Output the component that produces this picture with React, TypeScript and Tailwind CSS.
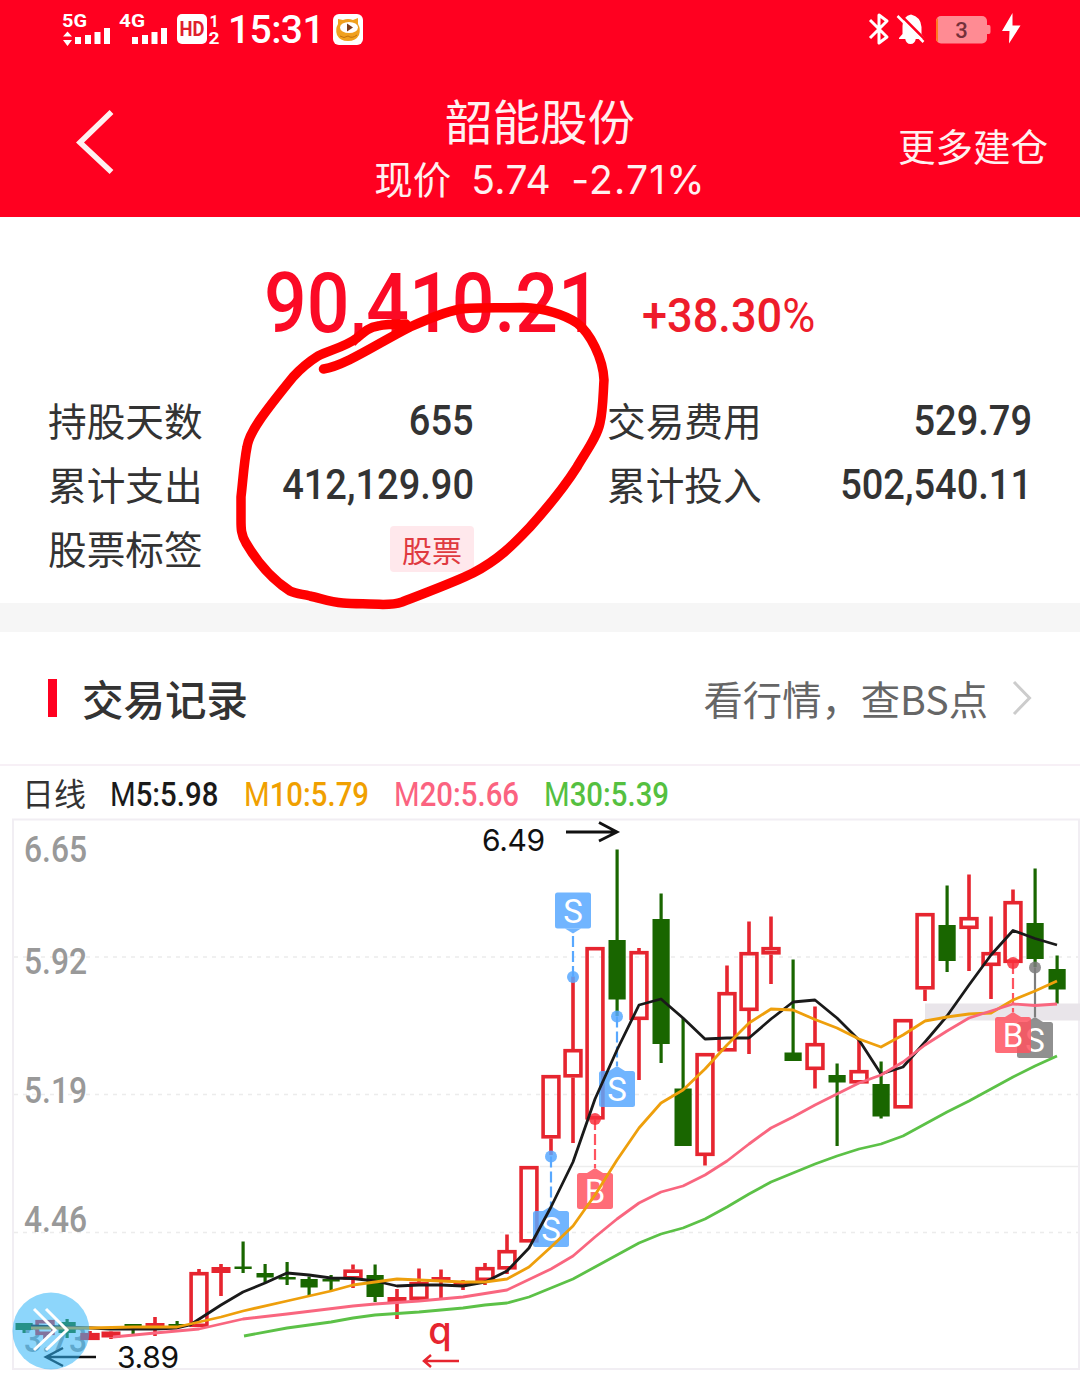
const RED = "#e6252f";
const GREEN = "#196600";

// x, high, top, bottom, low, color
type Candle = [number, number, number, number, number, "r" | "g"];

const candles: Candle[] = [
  [24, 1323, 1323, 1330, 1333, "g"],
  [45, 1320, 1320, 1335, 1339, "r"],
  [67, 1319, 1322, 1333, 1338, "g"],
  [90, 1331, 1333, 1340, 1340, "r"],
  [111, 1331, 1331.5, 1337.5, 1339, "r"],
  [133, 1324, 1324, 1327, 1334, "g"],
  [155, 1317, 1323, 1328, 1336, "r"],
  [177, 1321, 1324, 1327, 1327, "g"],
  [199, 1269, 1272, 1327, 1327, "r"],
  [221, 1264, 1267, 1273, 1296, "r"],
  [243, 1241.5, 1266.5, 1269, 1273, "g"],
  [265, 1264, 1273, 1277.5, 1282, "g"],
  [287, 1262, 1277, 1279.5, 1285, "g"],
  [309, 1276.5, 1279, 1287.5, 1295, "g"],
  [331, 1275, 1279, 1281.5, 1291, "g"],
  [353, 1264.5, 1269.5, 1279.5, 1288, "r"],
  [375, 1264.5, 1275, 1297, 1302, "g"],
  [397, 1289, 1297, 1302, 1319, "r"],
  [419, 1268.5, 1282, 1300, 1300, "r"],
  [441, 1269.5, 1277, 1281, 1299.5, "r"],
  [463, 1280, 1281, 1285, 1290, "r"],
  [485, 1263, 1267, 1281, 1285, "r"],
  [507, 1234.5, 1250, 1269.5, 1274, "r"],
  [529, 1166, 1166, 1242.5, 1242.5, "r"],
  [551, 1075, 1075, 1138.5, 1155, "r"],
  [573, 976.5, 1049, 1077.5, 1143, "r"],
  [595, 947, 947, 1119.5, 1119.5, "r"],
  [617, 849.5, 940, 999.5, 1016, "g"],
  [639, 948, 951, 1020, 1080, "r"],
  [661, 893.5, 919, 1044, 1063, "g"],
  [683, 1018, 1088.5, 1146, 1146, "g"],
  [705, 1053, 1053, 1156, 1165.5, "r"],
  [727, 965.5, 992, 1051.5, 1051.5, "r"],
  [749, 921.5, 952, 1011, 1054, "r"],
  [771, 916.5, 947, 954.5, 984, "r"],
  [793, 959.5, 1052.5, 1061, 1061, "g"],
  [815, 1006.5, 1043, 1070, 1088.5, "r"],
  [837, 1063.5, 1075, 1082.5, 1146, "g"],
  [859, 1040, 1070, 1083.5, 1083.5, "r"],
  [881, 1061.5, 1084, 1116.5, 1118.5, "g"],
  [903, 1019, 1019, 1108.5, 1108.5, "r"],
  [925, 913, 913, 989.5, 1001, "r"],
  [947, 885.5, 925, 961, 972, "g"],
  [969, 874.5, 917, 929, 971, "r"],
  [991, 916.5, 952, 966, 999, "r"],
  [1013, 889.5, 901, 963, 963, "r"],
  [1035, 868.5, 923, 959, 967, "g"],
  [1057, 955.5, 969, 989.5, 1003.5, "g"],
];

const averages = [
  {
    color: "#1a1a1a",
    points:
      "31,1326 92,1328 110,1329 155,1329 177,1328 190,1325 221,1305 243,1292 265,1283 287,1273 309,1275 331,1278 353,1278.5 375,1281 397,1286 419,1285 441,1285 463,1286 485,1282 507,1271 529,1248 551,1207 573,1162 595,1099 617,1050 639,1005 661,999 683,1018 705,1039 727,1038 749,1038 771,1019 793,1002 815,1000 837,1018 859,1040 881,1074 903,1067 925,1042 947,1016 969,985 991,955 1013,930.5 1035,938.5 1057,945",
  },
  {
    color: "#ee9f0c",
    points:
      "31,1328 90,1328 133,1327 177,1327 199,1322 221,1317 243,1311 287,1301 331,1291 353,1285 375,1282 397,1279 441,1281 463,1282 485,1282 507,1279 529,1267 551,1247 573,1226 595,1195 617,1160 639,1128 661,1103 683,1090 705,1069 727,1045 749,1023 771,1009 793,1010 815,1019.5 837,1028 859,1039 881,1047 903,1035 925,1021 947,1017 969,1014 991,1013 1013,1000 1035,991 1057,981",
  },
  {
    color: "#f9667f",
    points:
      "113,1337 155,1333 199,1329 243,1319 287,1314 353,1306 375,1304 419,1301 463,1297 507,1290 551,1269 573,1256 595,1237 617,1219 639,1203 661,1192 683,1186 705,1175 727,1161 749,1144 771,1128 793,1117 815,1105 837,1094 859,1083 881,1075 903,1062 925,1045 947,1031 969,1018 991,1011 1013,1004 1035,1005.5 1057,1004",
  },
  {
    color: "#5cc147",
    points:
      "244,1336 287,1328 331,1322 353,1318 375,1315 419,1312 441,1310 463,1308 485,1305 507,1303 529,1297 551,1288 573,1279 595,1267 617,1255 639,1243 661,1234 683,1228 705,1219 727,1207 749,1194 771,1182 793,1173 815,1164 837,1156 859,1149 881,1144 903,1136 925,1124 947,1112 969,1101 991,1089 1013,1077 1035,1066 1057,1056",
  },
];

const axisLabels = [
  { text: "6.65", y: 862 },
  { text: "5.92", y: 973.5 },
  { text: "5.19", y: 1103 },
  { text: "4.46", y: 1232 },
  { text: "3.73", y: 1352 },
];

// box y is the top edge of the square, dot is the price point it belongs to
const marks = [
  { letter: "S", x: 551, box: 1211, dot: 1156.5, color: "#58a8ff" },
  { letter: "S", x: 573, box: 892.5, dot: 977, color: "#58a8ff" },
  { letter: "B", x: 595, box: 1173, dot: 1119, color: "#ff5460" },
  { letter: "S", x: 617, box: 1071, dot: 1016.5, color: "#58a8ff" },
  { letter: "S", x: 1035, box: 1022, dot: 967.5, color: "#7d7d7d" },
  { letter: "B", x: 1013, box: 1017, dot: 963, color: "#ff5460" },
];

const CandleItem = ({ data }: { data: Candle }) => {
  const [x, high, top, bottom, low, kind] = data;
  if (kind === "g") {
    return (
      <g fill={GREEN}>
        <rect x={x - 1.5} y={high} width={3.2} height={low - high} />
        <rect x={x - 8.5} y={top} width={17.2} height={bottom - top} />
      </g>
    );
  }
  const solid = bottom - top < 6.5;
  return (
    <g fill={RED}>
      <rect x={x - 1.8} y={high} width={3.6} height={top - high} />
      <rect x={x - 1.8} y={bottom} width={3.6} height={low - bottom} />
      {solid ? (
        <rect x={x - 9.5} y={top} width={19} height={bottom - top} />
      ) : (
        <rect x={x - 7.9} y={top + 1.7} width={15.8} height={bottom - top - 3.4} fill="none" stroke={RED} strokeWidth={3.6} />
      )}
    </g>
  );
};

const Chart = () => {
  return (
    <svg viewBox="0 818 1080 563" className="block w-[1080px] h-[563px]">
      <rect x={13} y={819.5} width={1066} height={549.5} fill="none" stroke="#f1eef3" strokeWidth={2} />
      {[957, 1094.5, 1232.5].map((y) => (
        <line key={y} x1={14} x2={1078} y1={y} y2={y} stroke="#ececec" strokeWidth={1.5} strokeDasharray="4 5" />
      ))}
      <line x1={540} x2={1078} y1={1166.5} y2={1166.5} stroke="#ededed" strokeWidth={1.5} />
      <rect x={925} y={1003.5} width={155} height={17} fill="#e9e5ea" />

      {axisLabels.map((label) => (
        <text key={label.text} x={24} y={label.y} textLength={63} lengthAdjust="spacingAndGlyphs" fontSize={36} fill="#999" className="font-['Roboto',sans-serif] font-medium">
          {label.text}
        </text>
      ))}

      {candles.map((item) => (
        <CandleItem key={item[0]} data={item} />
      ))}

      {marks.map((m) => {
        const above = m.box < m.dot;
        const edge = above ? m.box + 36 : m.box;
        const tip = above ? edge + 5 : edge - 5;
        return (
          <g key={m.letter + m.x}>
            <line x1={m.x} x2={m.x} y1={m.dot} y2={tip} stroke={m.color} strokeWidth={2.2} strokeDasharray={m.color === "#7d7d7d" ? undefined : "11 4"} />
            <circle cx={m.x} cy={m.dot} r={6} fill={m.letter === "B" ? "#f8303c" : m.color} fillOpacity={0.85} />
            <g fill={m.color} fillOpacity={0.85}>
              <rect x={m.x - 18} y={m.box} width={36} height={36} rx={2.5} />
              <path d={`M${m.x - 8} ${edge}L${m.x} ${tip}L${m.x + 8} ${edge}Z`} />
            </g>
            <text x={m.x} y={m.box + 30} textAnchor="middle" fontSize={33} fill="#fff" className="font-['Roboto',sans-serif]">
              {m.letter}
            </text>
          </g>
        );
      })}

      {averages.map((line) => (
        <polyline key={line.color} points={line.points} fill="none" stroke={line.color} strokeWidth={2.8} strokeLinejoin="round" />
      ))}

      <text x={482} y={850.5} textLength={63} fontSize={30} fill="#111" className="font-['Inter',sans-serif]">6.49</text>
      <path d="M566 832H616M599 822.5L617 832L599 841" fill="none" stroke="#111" strokeWidth={2.8} />
      <text x={117} y={1367.5} textLength={62} fontSize={30} fill="#111" className="font-['Inter',sans-serif]">3.89</text>
      <path d="M96 1357H47M63 1348L46 1357L63 1366" fill="none" stroke="#111" strokeWidth={2.5} />

      <text x={440} y={1343.5} textAnchor="middle" fontSize={38} fill={RED} className="font-['Inter',sans-serif] font-medium">q</text>
      <path d="M459 1361H424M431 1355L424 1361L431 1367" fill="none" stroke={RED} strokeWidth={2.5} />

      <circle cx={51} cy={1331} r={38.5} fill="#2fb4f8" fillOpacity={0.55} />
      <path d="M34 1309L55 1330L34 1350M46 1309L67 1330L46 1350" fill="none" stroke="#fff" strokeWidth={3} />
    </svg>
  );
};

const StatusBar = () => {
  return (
    <div className="h-[60px] flex items-center">
      <svg viewBox="0 0 225 60" className="w-[225px] h-[60px] shrink-0" fill="#fff">
        <text x={62} y={27} fontSize={19} textLength={25} lengthAdjust="spacingAndGlyphs" className="font-['Roboto',sans-serif] font-bold">5G</text>
        <path d="M63 36.500L67.500 31.500L72 36.500ZM63 40L67.500 46L72 40Z" />
        <path d="M75 37h6v7h-6zM85 35h6v9h-6zM94.500 32h6v12h-6zM104 28h6v16h-6z" />
        <text x={119} y={27} fontSize={19} textLength={26} lengthAdjust="spacingAndGlyphs" className="font-['Roboto',sans-serif] font-bold">4G</text>
        <path d="M132 37h6v7h-6zM142 35h6v9h-6zM151.500 32h6v12h-6zM161 28h6v16h-6z" />
        <rect x={177} y={14} width={30} height={30} rx={5} />
        <text x={179.500} y={36} fontSize={20} textLength={25} lengthAdjust="spacingAndGlyphs" fill="#e0202c" className="font-['Roboto',sans-serif] font-bold">HD</text>
        <text x={209.500} y={26.500} fontSize={16} className="font-['Roboto',sans-serif] font-bold">1</text>
        <text x={208.500} y={43.500} fontSize={16} textLength={11} lengthAdjust="spacingAndGlyphs" className="font-['Roboto',sans-serif] font-bold">2</text>
      </svg>
      <span className="ml-[3px] w-[104px] text-[39px] leading-[60px] tracking-[-0.6px] text-white font-medium font-['Roboto',sans-serif]">15:31</span>
      <svg viewBox="0 0 32 32" className="w-8 h-8 shrink-0">
        <rect x={1} y={0} width={30} height={31} rx={6} fill="#fff" />
        <path d="M6 10L6 5L11 6Q16 4 21 6L26 4L26 10Q29 15 27 21Q24 27 16 27Q8 27 5 21Q3 15 6 10Z" fill="#f0a01e" />
        <ellipse cx={17} cy={13.500} rx={9} ry={5.500} fill="#fff" />
        <path d="M15 9.500L21 13.500L15 17.500Z" fill="#7b3a1c" />
        <path d="M8 22Q12 25 16 22Q20 25 25 21" fill="none" stroke="#c2700c" strokeWidth={1} />
      </svg>
      <svg viewBox="0 0 160 60" className="w-[160px] h-[60px] ml-auto mr-[55px]">
        <path d="M5 20L22 37L14 43V15L22 21L5 38" fill="none" stroke="#fff" strokeWidth={3} strokeLinejoin="round" />
        <path d="M46 14.500Q56 17 56.500 27V34L59.500 38V39H34V38L37.500 34V26Q38 16 46 14.500Z" fill="#fff" />
        <path d="M40 38H51Q50 44 45.500 44Q41 44 40 38Z" fill="#fff" />
        <path d="M35 14.500L61 40.500" stroke="#ff0020" strokeWidth={2.500} />
        <path d="M32.500 16L58.500 42" stroke="#fff" strokeWidth={2.500} />
        <rect x={71} y={16} width={51} height={27.500} rx={5} fill="#ff8b93" />
        <path d="M73 18Q71 19 71 22V38Q71 41 73 42Z" fill="#ff7a1f" />
        <path d="M122 25h2q1.500 0 1.500 2v5q0 2-1.500 2h-2z" fill="#ff8b93" />
        <text x={96.500} y={37.500} textAnchor="middle" fontSize={22} fill="#74303a" className="font-['Roboto',sans-serif] font-medium">3</text>
        <path d="M147.500 13L137 31H144.500L144 43.500L155.500 25.500H147.500Z" fill="#fff" />
      </svg>
    </div>
  );
};

const Header = () => {
  return (
    <div className="h-[217px] bg-[#ff0020] text-[#fff0f0]">
      <StatusBar />
      <div className="flex h-[157px]">
        <div className="w-[300px] pl-[75px] pt-[50px]">
          <svg viewBox="0 0 40 64" className="w-10 h-16">
            <path d="M36.500 2L5 32.500L36.500 62" fill="none" stroke="#fff0f0" strokeWidth={5.500} />
          </svg>
        </div>
        <div className="w-[480px] pt-[32px] flex flex-col items-center">
          <h1 className="text-[47.5px] leading-[56px]">韶能股份</h1>
          <div className="mt-[1px] flex text-[38.5px] leading-[56px] whitespace-nowrap">
            <span>现价</span>
            <span className="ml-[20px] pt-[3px] text-[39px] tracking-[0.4px] font-['Inter',sans-serif]">5.74</span>
            <span className="ml-[20px] pt-[3px] text-[39px] tracking-[1.2px] font-['Inter',sans-serif]">-2.71%</span>
          </div>
        </div>
        <div className="w-[300px] pr-[32px] pt-[57px] text-right text-[37.5px] leading-[56px]">更多建仓</div>
      </div>
    </div>
  );
};

const Row = ({ label, value }: { label: string; value: string }) => {
  return (
    <div className="flex justify-between items-center h-16">
      <span className="pb-[5px] text-[38.7px]">{label}</span>
      <span className="inline-block origin-right scale-x-[0.905] text-[42px] font-medium font-['Roboto',sans-serif]">{value}</span>
    </div>
  );
};

const Summary = () => {
  return (
    <div className="h-[386px] pt-[43px]">
      <div className="flex items-baseline h-[129px] pl-[264px] text-[#fb0a25] font-medium font-['Roboto',sans-serif]">
        <span className="w-[378px] inline-block origin-left scale-x-[0.895] text-[84px] leading-[88px]">90,410.21</span>
        <span className="inline-block origin-left scale-x-[0.95] text-[47.5px] text-[#ee1c2b]">+38.30<span className="font-normal">%</span></span>
      </div>
      <div className="flex justify-between pl-[48px] pr-[48px] text-[#333] leading-[64px]">
        <div className="w-[426px]">
          <Row label="持股天数" value="655" />
          <Row label="累计支出" value="412,129.90" />
          <div className="flex justify-between items-center h-16">
            <span className="pb-[5px] text-[38.7px]">股票标签</span>
            <span className="h-[46px] px-3 rounded bg-[#ffe8ec] text-[30px] leading-[46px] text-[#e03a40]">股票</span>
          </div>
        </div>
        <div className="w-[425px]">
          <Row label="交易费用" value="529.79" />
          <Row label="累计投入" value="502,540.11" />
        </div>
      </div>
    </div>
  );
};

const LegendItem = ({ name, value }: { name: string; value: string }) => {
  return (
    <span className="inline-block pt-[6px] origin-left scale-x-[0.89] text-[33px] font-medium font-['Roboto',sans-serif]">
      <span className="font-normal">{name}</span>
      {value}
    </span>
  );
};

const Legend = () => {
  return (
    <div className="flex items-center h-[52px] pl-[22px] whitespace-nowrap">
      <div className="w-[88px] pb-[1px] text-[32px] text-[#333]">日线</div>
      <div className="w-[134px] text-[#1a1a1a]"><LegendItem name="M" value="5:5.98" /></div>
      <div className="w-[150px] text-[#f0a000]"><LegendItem name="M" value="10:5.79" /></div>
      <div className="w-[150px] text-[#fb6380]"><LegendItem name="M" value="20:5.66" /></div>
      <div className="w-[150px] text-[#55c040]"><LegendItem name="M" value="30:5.39" /></div>
    </div>
  );
};

const App = () => {
  return (
    <div className="relative w-[1080px] h-[1381px] overflow-hidden bg-white font-['Noto_Sans_CJK_SC',sans-serif]">
      <Header />
      <Summary />
      <div className="h-[29px] bg-[#f6f6f6]" />
      <div className="flex items-center h-[134px] pl-[48px] pr-[48px] border-b-2 border-[#f7f0f6]">
        <div className="w-[9px] h-[38px] bg-[#ff0020]" />
        <h2 className="ml-[25px] text-[41.5px] font-medium text-[#333]">交易记录</h2>
        <span className="ml-auto text-[39.3px] text-[#666]">看行情，查BS点</span>
        <svg viewBox="0 0 20 36" className="w-5 h-9 ml-[24px]">
          <path d="M2 2L17.500 18L2 34" fill="none" stroke="#ccc" strokeWidth={3} />
        </svg>
      </div>
      <Legend />
      <Chart />

      {/* hand drawn circle */}
      <svg viewBox="0 0 1080 1381" className="absolute inset-0 w-[1080px] h-[1381px] pointer-events-none">
        <path
          d="M323.500 369C345 366 380 342 410 327C430 318 446 312 460 309C475 307 490 308 523 307.500C545 308 565 315 577 323C590 333 603 358 604 380C603 395 603 410 600 423C597 437 587 450 577 467C565 486 548 507 530 527C512 546 498 560 473 573C455 582 430 591 402 602C395 604.500 388 604.500 383 604.500C370 603.500 355 604 343 603C330 602 320 598 310 596C302 594 296 594 290 591C270 578 256 560 246 543C241 535 241 528 241 520V497C243 480 244 462 247 447C249 433 262 415 293 377C303 366 310 361 318 356C330 350 345 347 357 338C365 331 370 327 378 326C385 324 397 324 406 324"
          fill="none"
          stroke="#ff0000"
          strokeWidth={9.500}
          strokeLinecap="round"
          strokeLinejoin="round"
        />
      </svg>
    </div>
  );
};

export default App;
